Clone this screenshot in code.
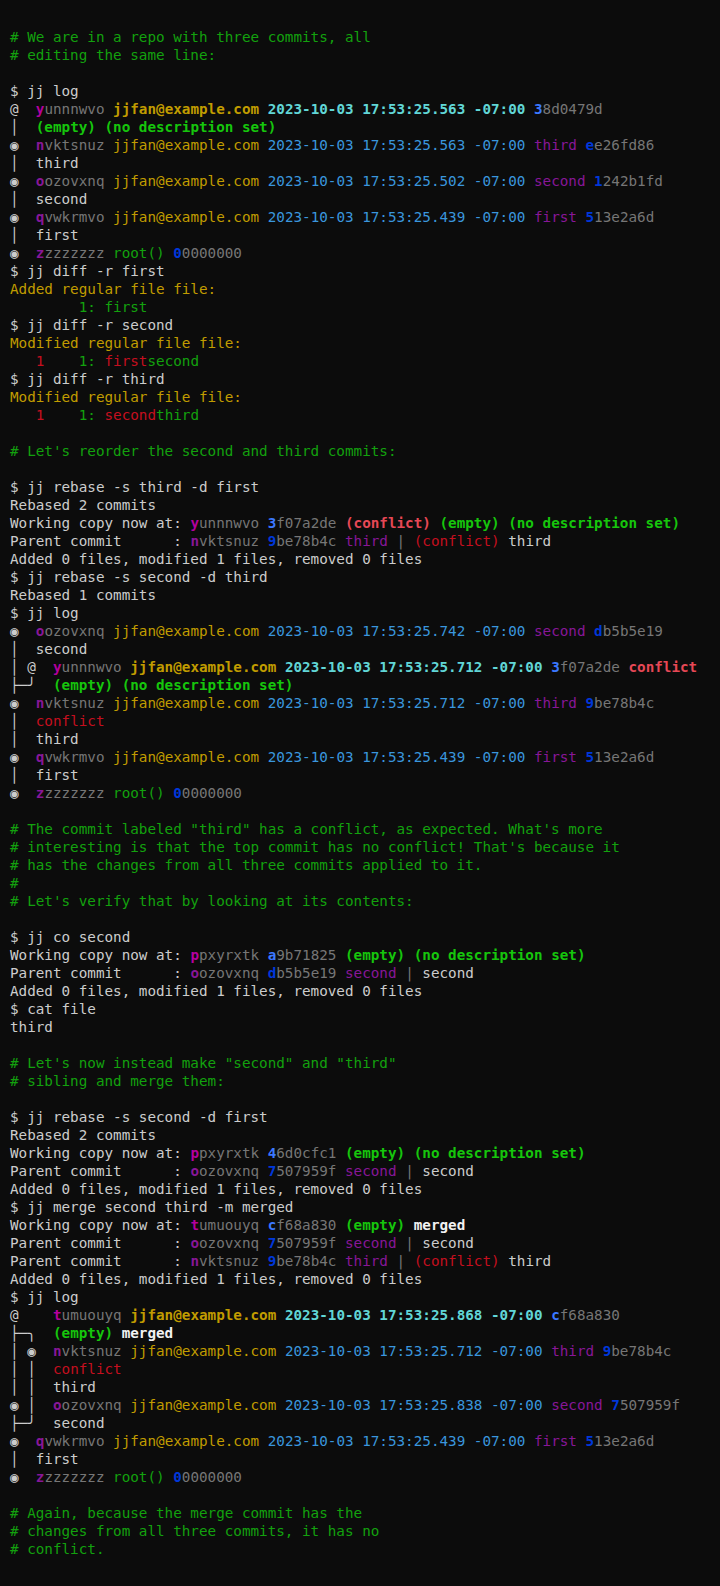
import React from "react";

type Seg = [string, string?];
type Line = Seg[];

const FG = "text-[#cccccc]";
const GRAY = "text-[#767676]";
const CMT = "text-[#13a10e]";
const GREEN = "text-[#13a10e]";
const BGREEN = "text-[#16c60c] font-bold";
const RED = "text-[#c50f1f]";
const BRED = "text-[#e74856] font-bold";
const PURPLE = "text-[#881798]";
const YELLOW = "text-[#c19c00]";
const WHITEB = "text-[#f2f2f2] font-bold";

const cid = (id: string, wc = false): Seg[] => [
  [id[0], wc ? "text-[#b4009e] font-bold" : "text-[#881798] font-bold"],
  [id.slice(1), GRAY],
];
const hid = (id: string, wc = false): Seg[] => [
  [id[0], wc ? "text-[#3b78ff] font-bold" : "text-[#0037da] font-bold"],
  [id.slice(1), GRAY],
];

const entry = (
  graph: string,
  change: string,
  ms: string,
  branch: string | null,
  commit: string,
  wc = false,
  extra: Seg[] = []
): Line => [
  [graph, FG],
  ...cid(change, wc),
  [" "],
  ["jjfan@example.com", wc ? "text-[#c19c00] font-bold" : "text-[#c19c00]"],
  [" "],
  [
    "2023-10-03 17:53:25." + ms + " -07:00",
    wc ? "text-[#61d6d6] font-bold" : "text-[#3a96dd]",
  ],
  [" "],
  ...(branch ? ([[branch, PURPLE], [" "]] as Seg[]) : []),
  ...hid(commit, wc),
  ...extra,
];

const root = (graph: string): Line => [
  [graph, FG],
  ...cid("zzzzzzzz"),
  [" "],
  ["root()", GREEN],
  [" "],
  ...hid("00000000"),
];

const c = (t: string): Line => [[t, CMT]];
const p = (t: string): Line => [[t, FG]];
const blank: Line = [[""]];
const added: Line = [["Added 0 files, modified 1 files, removed 0 files", FG]];

const wcLine = (change: string, commit: string, rest: Seg[]): Line => [
  ["Working copy now at: ", FG],
  ...cid(change, true),
  [" "],
  ...hid(commit, true),
  [" "],
  ...rest,
];

const parent = (change: string, commit: string, branch: string, rest: Seg[]): Line => [
  ["Parent commit      : ", FG],
  ...cid(change),
  [" "],
  ...hid(commit),
  [" "],
  [branch, PURPLE],
  [" "],
  ["|", GRAY],
  [" "],
  ...rest,
];

const lines: Line[] = [
  c("# We are in a repo with three commits, all"),
  c("# editing the same line:"),
  blank,
  p("$ jj log"),
  entry("@  ", "yunnnwvo", "563", null, "38d0479d", true),
  [["│  ", FG], ["(empty) (no description set)", BGREEN]],
  entry("◉  ", "nvktsnuz", "563", "third", "ee26fd86"),
  p("│  third"),
  entry("◉  ", "oozovxnq", "502", "second", "1242b1fd"),
  p("│  second"),
  entry("◉  ", "qvwkrmvo", "439", "first", "513e2a6d"),
  p("│  first"),
  root("◉  "),
  p("$ jj diff -r first"),
  [["Added regular file file:", YELLOW]],
  [["        "], ["1: ", GREEN], ["first", GREEN]],
  p("$ jj diff -r second"),
  [["Modified regular file file:", YELLOW]],
  [["   "], ["1", RED], ["    "], ["1: ", GREEN], ["first", RED], ["second", GREEN]],
  p("$ jj diff -r third"),
  [["Modified regular file file:", YELLOW]],
  [["   "], ["1", RED], ["    "], ["1: ", GREEN], ["second", RED], ["third", GREEN]],
  blank,
  c("# Let's reorder the second and third commits:"),
  blank,
  p("$ jj rebase -s third -d first"),
  p("Rebased 2 commits"),
  wcLine("yunnnwvo", "3f07a2de", [
    ["(conflict)", BRED],
    [" "],
    ["(empty) (no description set)", BGREEN],
  ]),
  parent("nvktsnuz", "9be78b4c", "third", [["(conflict)", RED], [" "], ["third", FG]]),
  added,
  p("$ jj rebase -s second -d third"),
  p("Rebased 1 commits"),
  p("$ jj log"),
  entry("◉  ", "oozovxnq", "742", "second", "db5b5e19"),
  p("│  second"),
  entry("│ @  ", "yunnnwvo", "712", null, "3f07a2de", true, [
    [" "],
    ["conflict", BRED],
  ]),
  [["├─╯  ", FG], ["(empty) (no description set)", BGREEN]],
  entry("◉  ", "nvktsnuz", "712", "third", "9be78b4c"),
  [["│  ", FG], ["conflict", RED]],
  p("│  third"),
  entry("◉  ", "qvwkrmvo", "439", "first", "513e2a6d"),
  p("│  first"),
  root("◉  "),
  blank,
  c("# The commit labeled \"third\" has a conflict, as expected. What's more"),
  c("# interesting is that the top commit has no conflict! That's because it"),
  c("# has the changes from all three commits applied to it."),
  c("#"),
  c("# Let's verify that by looking at its contents:"),
  blank,
  p("$ jj co second"),
  wcLine("ppxyrxtk", "a9b71825", [["(empty) (no description set)", BGREEN]]),
  parent("oozovxnq", "db5b5e19", "second", [["second", FG]]),
  added,
  p("$ cat file"),
  p("third"),
  blank,
  c("# Let's now instead make \"second\" and \"third\""),
  c("# sibling and merge them:"),
  blank,
  p("$ jj rebase -s second -d first"),
  p("Rebased 2 commits"),
  wcLine("ppxyrxtk", "46d0cfc1", [["(empty) (no description set)", BGREEN]]),
  parent("oozovxnq", "7507959f", "second", [["second", FG]]),
  added,
  p("$ jj merge second third -m merged"),
  wcLine("tumuouyq", "cf68a830", [["(empty)", BGREEN], [" "], ["merged", WHITEB]]),
  parent("oozovxnq", "7507959f", "second", [["second", FG]]),
  parent("nvktsnuz", "9be78b4c", "third", [["(conflict)", RED], [" "], ["third", FG]]),
  added,
  p("$ jj log"),
  entry("@    ", "tumuouyq", "868", null, "cf68a830", true),
  [["├─╮  ", FG], ["(empty)", BGREEN], [" "], ["merged", WHITEB]],
  entry("│ ◉  ", "nvktsnuz", "712", "third", "9be78b4c"),
  [["│ │  ", FG], ["conflict", RED]],
  p("│ │  third"),
  entry("◉ │  ", "oozovxnq", "838", "second", "7507959f"),
  p("├─╯  second"),
  entry("◉  ", "qvwkrmvo", "439", "first", "513e2a6d"),
  p("│  first"),
  root("◉  "),
  blank,
  c("# Again, because the merge commit has the"),
  c("# changes from all three commits, it has no"),
  c("# conflict."),
];

export default function App() {
  return (
    <div className="min-h-screen w-full bg-[#0c0c0c] pt-[28px] pb-[28px] pl-[10px] font-['DejaVu_Sans_Mono',monospace] text-[14.28px] text-[#cccccc]">
      {lines.map((line, i) => (
        <div key={i} className="h-[18px] leading-[18px] whitespace-pre">
          {line.map(([t, cls], j) => (
            <span key={j} className={cls ?? FG}>
              {t}
            </span>
          ))}
        </div>
      ))}
    </div>
  );
}
